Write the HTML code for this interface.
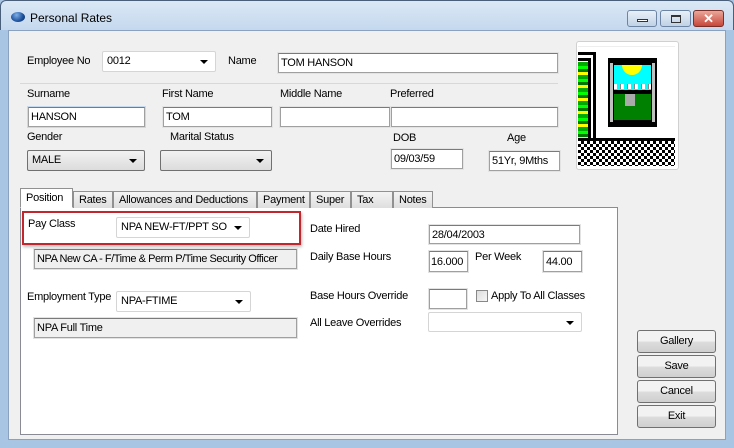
<!DOCTYPE html>
<html><head><style>
*{box-sizing:border-box;margin:0;padding:0}
body{width:734px;height:448px;overflow:hidden;background:#a9c5e4;font-family:"Liberation Sans",sans-serif;font-size:11px;letter-spacing:-0.25px;color:#000;position:relative}
.a{position:absolute}
.lbl{position:absolute;white-space:nowrap;line-height:13px}
.tb{position:absolute;background:#fff;border:1px solid #a0a0a0;border-top-color:#7a7a7a;box-shadow:0 0 0 1px #e3e3e3;padding:2px 2px;line-height:14px;white-space:nowrap;overflow:hidden}
.ro{background:#f0f0f0;box-shadow:0 0 0 1px #e3e3e3}
.cb{position:absolute;background:#fff;border:1px solid #d5d5d5;border-radius:2px;padding:2px 4px;line-height:14px;white-space:nowrap}
.cbg{background:linear-gradient(#f2f2f2,#dcdcdc);border:1px solid #707070}
.arr{position:absolute;right:7px;top:8px;width:0;height:0;border-left:4px solid transparent;border-right:4px solid transparent;border-top:4px solid #000}
.tab{position:absolute;top:191px;height:17px;background:linear-gradient(#f4f4f4,#dedede);border:1px solid #919191;border-bottom:none;padding:2px 0 0 5px;line-height:13px;white-space:nowrap}
.btn{position:absolute;left:637px;width:79px;height:23px;border:1px solid #707070;border-radius:3px;background:linear-gradient(#f2f2f2 50%,#dddddd 50%,#cfcfcf);text-align:center;line-height:21px}
</style></head><body>
<div class="a" style="left:0;top:0;width:734px;height:30px;background:linear-gradient(#dbe8f5,#c4d8ee);border-radius:6px 6px 0 0;border:1px solid #4a5f7a;border-bottom:none"></div>
<div class="a" style="left:11px;top:12px;width:14px;height:10px;border-radius:50%;background:radial-gradient(circle at 40% 30%,#7fb0e8,#1b4f9a 60%,#0b2a5a)"></div>
<div class="lbl" style="left:30px;top:12px;font-size:12px;letter-spacing:0">Personal Rates</div>
<div class="a" style="left:627px;top:10px;width:30px;height:17px;border:1px solid #6d85a3;border-radius:3px;background:linear-gradient(#e8f0f8,#c0d2e6)"><div class="a" style="left:9px;top:8px;width:11px;height:3px;border:1px solid #333;background:#fff"></div></div>
<div class="a" style="left:660px;top:10px;width:31px;height:17px;border:1px solid #6d85a3;border-radius:3px;background:linear-gradient(#e8f0f8,#c0d2e6)"><div class="a" style="left:10px;top:4px;width:10px;height:8px;border:1px solid #333;border-top-width:2px"></div></div>
<div class="a" style="left:693px;top:10px;width:31px;height:17px;border:1px solid #7a3028;border-radius:3px;background:linear-gradient(#e9a79a,#c7473a);color:#fff;font-weight:bold;text-align:center;line-height:15px;font-size:13px">✕</div>
<div class="a" style="left:8px;top:30px;width:718px;height:410px;background:#f0f0f0;border:1px solid #8aa2bf"></div>

<div class="lbl" style="left:27px;top:55px">Employee No</div>
<div class="cb" style="left:102px;top:51px;width:114px;height:21px">0012<div class="arr"></div></div>
<div class="lbl" style="left:228px;top:55px">Name</div>
<div class="tb" style="left:278px;top:53px;width:280px;height:20px">TOM HANSON</div>
<div class="a" style="left:20px;top:83px;width:538px;height:1px;background:#d8d8d8"></div>

<div class="lbl" style="left:27px;top:88px">Surname</div>
<div class="tb" style="left:28px;top:107px;width:117px;height:20px;box-shadow:0 0 0 1px #c5daf0">HANSON</div>
<div class="lbl" style="left:162px;top:88px">First Name</div>
<div class="tb" style="left:163px;top:107px;width:109px;height:20px">TOM</div>
<div class="lbl" style="left:280px;top:88px">Middle Name</div>
<div class="tb" style="left:280px;top:107px;width:110px;height:20px"></div>
<div class="lbl" style="left:390px;top:88px">Preferred</div>
<div class="tb" style="left:391px;top:107px;width:167px;height:20px"></div>

<div class="lbl" style="left:27px;top:131px">Gender</div>
<div class="cb cbg" style="left:27px;top:150px;width:118px;height:21px">MALE<div class="arr"></div></div>
<div class="lbl" style="left:170px;top:131px">Marital Status</div>
<div class="cb cbg" style="left:160px;top:150px;width:112px;height:21px"><div class="arr"></div></div>
<div class="lbl" style="left:393px;top:132px">DOB</div>
<div class="tb" style="left:391px;top:149px;width:72px;height:20px">09/03/59</div>
<div class="lbl" style="left:507px;top:132px">Age</div>
<div class="tb" style="left:489px;top:151px;width:71px;height:20px">51Yr, 9Mths</div>

<div class="a" style="left:576px;top:41px;width:103px;height:129px;border:1px solid #d0d0d0;border-radius:3px;background:#fff"></div>
<div class="a" style="left:578px;top:46px;width:97px;height:1px;background:#eee"></div>
<div class="a" style="left:578px;top:52px;width:18px;height:3px;background:#000"></div>
<div class="a" style="left:593px;top:52px;width:3px;height:88px;background:#000"></div>
<div class="a" style="left:578px;top:58px;width:12px;height:3px;background:#000"></div>
<div class="a" style="left:588px;top:58px;width:3px;height:82px;background:#000"></div>
<div class="a" style="left:578px;top:62px;width:10px;height:76px;background:repeating-linear-gradient(#0a0 0 4px,#0f0 4px 7px,#070 7px 10px,#ff0 10px 13px)"></div>
<div class="a" style="left:608px;top:58px;width:49px;height:69px;background:#000"></div>
<div class="a" style="left:610px;top:63px;width:3px;height:59px;background:#c0c0c0"></div>
<div class="a" style="left:652px;top:63px;width:3px;height:59px;background:#c0c0c0"></div>
<div class="a" style="left:614px;top:65px;width:37px;height:25px;background:#0ff"></div>
<div class="a" style="left:622px;top:65px;width:20px;height:10px;background:#ff0;border-radius:0 0 10px 10px"></div>
<div class="a" style="left:614px;top:84px;width:37px;height:5px;background:repeating-linear-gradient(90deg,#fff 0 3px,#0ff 3px 6px,#888 6px 7px)"></div>
<div class="a" style="left:614px;top:94px;width:37px;height:26px;background:#008000"></div>
<div class="a" style="left:625px;top:94px;width:10px;height:12px;background:#aaa"></div>
<div class="a" style="left:578px;top:138px;width:97px;height:3px;background:#000"></div>
<div class="a" style="left:578px;top:141px;width:97px;height:25px;background:repeating-conic-gradient(#000 0 25%,#fff 0 50%) 0 0/6px 6px"></div>

<div class="a" style="left:20px;top:207px;width:598px;height:228px;background:#fff;border:1px solid #898c95"></div>
<div class="tab" style="left:20px;top:188px;width:53px;height:20px;background:#fff;border-bottom:1px solid #fff;padding-top:3px">Position</div>
<div class="tab" style="left:73px;width:40px">Rates</div>
<div class="tab" style="left:113px;width:144px">Allowances and Deductions</div>
<div class="tab" style="left:257px;width:53px">Payment</div>
<div class="tab" style="left:310px;width:41px">Super</div>
<div class="tab" style="left:351px;width:42px">Tax</div>
<div class="tab" style="left:393px;width:40px">Notes</div>

<div class="a" style="left:22px;top:211px;width:279px;height:34px;border:2px solid #c1272d;box-shadow:1px 2px 3px #bbb"></div>
<div class="lbl" style="left:28px;top:218px">Pay Class</div>
<div class="cb" style="left:116px;top:217px;width:134px;height:21px">NPA NEW-FT/PPT SO<div class="arr"></div></div>
<div class="tb ro" style="left:34px;top:249px;width:263px;height:20px;letter-spacing:-0.45px">NPA New CA - F/Time &amp; Perm P/Time Security Officer</div>
<div class="lbl" style="left:27px;top:291px">Employment Type</div>
<div class="cb" style="left:116px;top:291px;width:135px;height:21px">NPA-FTIME<div class="arr"></div></div>
<div class="tb ro" style="left:34px;top:318px;width:263px;height:20px">NPA Full Time</div>

<div class="lbl" style="left:310px;top:223px">Date Hired</div>
<div class="tb" style="left:429px;top:225px;width:151px;height:19px">28/04/2003</div>
<div class="lbl" style="left:310px;top:251px">Daily Base Hours</div>
<div class="tb" style="left:429px;top:251px;width:39px;height:21px;padding:3px 1px">16.000</div>
<div class="lbl" style="left:475px;top:251px">Per Week</div>
<div class="tb" style="left:543px;top:251px;width:39px;height:21px;padding:3px 2px">44.00</div>
<div class="lbl" style="left:310px;top:290px">Base Hours Override</div>
<div class="tb" style="left:429px;top:289px;width:38px;height:20px"></div>
<div class="a" style="left:476px;top:290px;width:12px;height:12px;border:1px solid #888;background:linear-gradient(135deg,#ddd,#f6f6f6)"></div>
<div class="lbl" style="left:491px;top:290px">Apply To All Classes</div>
<div class="lbl" style="left:310px;top:317px">All Leave Overrides</div>
<div class="cb" style="left:428px;top:312px;width:154px;height:20px"><div class="arr"></div></div>

<div class="btn" style="top:330px">Gallery</div>
<div class="btn" style="top:355px">Save</div>
<div class="btn" style="top:380px">Cancel</div>
<div class="btn" style="top:405px">Exit</div>
</body></html>
